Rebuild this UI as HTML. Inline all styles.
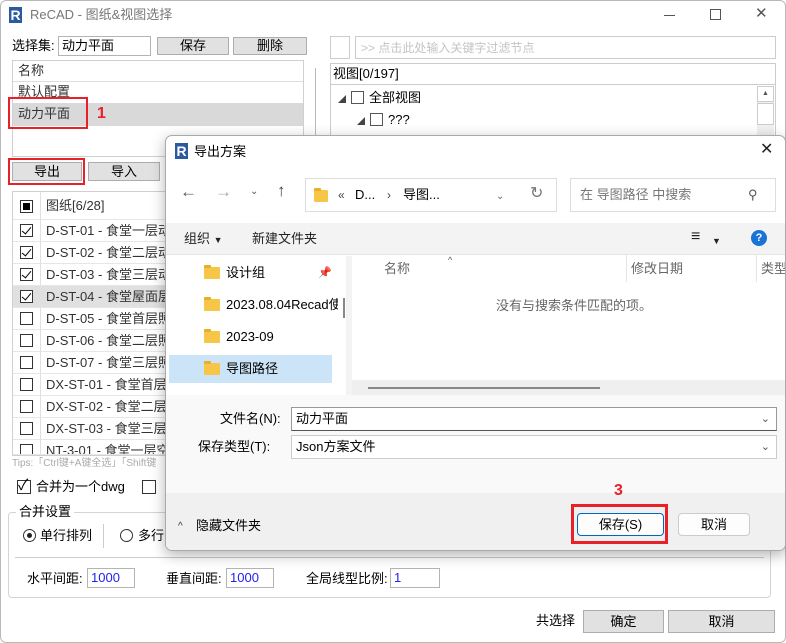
<!DOCTYPE html>
<html><head><meta charset="utf-8">
<style>
*{box-sizing:border-box;margin:0;padding:0}
body{width:786px;height:643px;overflow:hidden;background:#fff;font-family:"Liberation Sans","Noto Sans CJK SC",sans-serif;font-size:12px;line-height:16px;color:#000;position:relative}
.a{position:absolute;white-space:nowrap}
.btn{position:absolute;background:#e1e1e1;border:1px solid #adadad;text-align:center;font-size:12px}
.inp{position:absolute;background:#fff;border:1px solid #b4b4b4;line-height:16px}
.cb{position:absolute;width:13px;height:13px;border:1px solid #333;background:#fff}
.red{position:absolute;border:2px solid #e8202a}
.rn{position:absolute;color:#e8202a;font-weight:bold;font-size:16px;line-height:18px}
.row{position:absolute;left:13px;width:290px;height:22px;border-bottom:1px solid #e6e6e6}
.row span{position:absolute;left:33px;top:3px;color:#333;font-size:13px;white-space:nowrap}
.row .cb{left:7px;top:4px}
.row .ck::after{content:"";position:absolute;left:3px;top:0px;width:4px;height:8px;border:solid #000;border-width:0 1.5px 1.5px 0;transform:rotate(40deg)}
.fold{position:absolute;width:16px;height:12px;background:#f7c648;border-radius:1px}
.fold::before{content:"";position:absolute;left:0;top:-2px;width:7px;height:3px;background:#e9ae2a;border-radius:1px 1px 0 0}
</style></head><body>
<div class="a" style="left:0;top:0;width:786px;height:643px;border:1px solid #b9b9b9;border-radius:6px"></div>
<div class="a" style="left:9px;top:7px;width:13px;height:16px;background:#2c5aa0;color:#fff;font-weight:bold;font-size:14px;line-height:16px;text-align:center">R</div>
<div class="a" style="left:30px;top:7px;color:#777;font-size:13px">ReCAD - 图纸&amp;视图选择</div>
<div class="a" style="left:664px;top:15px;width:11px;height:1px;background:#555"></div>
<div class="a" style="left:710px;top:9px;width:11px;height:11px;border:1px solid #555"></div>
<div class="a" style="left:755px;top:6px;font-size:15px;color:#555">✕</div>

<div class="a" style="left:12px;top:38px;font-size:13px">选择集:</div>
<div class="inp" style="left:58px;top:36px;width:93px;height:20px;padding:1px 3px;font-size:13px">动力平面</div>
<div class="btn" style="left:157px;top:37px;width:72px;height:18px;line-height:16px;font-size:13px">保存</div>
<div class="btn" style="left:233px;top:37px;width:74px;height:18px;line-height:16px;font-size:13px">删除</div>

<div class="a" style="left:12px;top:60px;width:292px;height:97px;border:1px solid #d0d0d0;background:#fff"></div>
<div class="a" style="left:13px;top:61px;width:290px;height:21px;border-bottom:1px solid #ddd"><span class="a" style="left:5px;top:2px;color:#333;font-size:13px">名称</span></div>
<div class="a" style="left:18px;top:84px;color:#333;font-size:13px">默认配置</div>
<div class="a" style="left:13px;top:103px;width:290px;height:23px;background:#d9d9d9"></div>
<div class="a" style="left:18px;top:106px;color:#333;font-size:13px">动力平面</div>
<div class="red" style="left:8px;top:97px;width:80px;height:32px"></div>
<div class="rn" style="left:97px;top:105px">1</div>

<div class="btn" style="left:12px;top:162px;width:70px;height:19px;line-height:17px;font-size:13px">导出</div>
<div class="red" style="left:8px;top:158px;width:77px;height:27px"></div>
<div class="rn" style="left:91px;top:162px">2</div>
<div class="btn" style="left:88px;top:162px;width:72px;height:19px;line-height:17px;font-size:13px">导入</div>

<div class="a" style="left:12px;top:191px;width:300px;height:265px;border:1px solid #d0d0d0;background:#fff"></div>
<div class="a" style="left:40px;top:192px;width:1px;height:263px;background:#e0e0e0"></div>
<div class="row" style="top:192px;height:28px"><div class="cb" style="top:8px"><div style="position:absolute;left:2px;top:2px;width:7px;height:7px;background:#000"></div></div><span style="top:6px">图纸[6/28]</span></div>
<div class="row" style="top:220px"><div class="cb ck"></div><span>D-ST-01 - 食堂一层动</span></div>
<div class="row" style="top:242px"><div class="cb ck"></div><span>D-ST-02 - 食堂二层动</span></div>
<div class="row" style="top:264px"><div class="cb ck"></div><span>D-ST-03 - 食堂三层动</span></div>
<div class="row" style="top:286px;background:#e0e0e0"><div class="cb ck"></div><span>D-ST-04 - 食堂屋面层</span></div>
<div class="row" style="top:308px"><div class="cb"></div><span>D-ST-05 - 食堂首层照</span></div>
<div class="row" style="top:330px"><div class="cb"></div><span>D-ST-06 - 食堂二层照</span></div>
<div class="row" style="top:352px"><div class="cb"></div><span>D-ST-07 - 食堂三层照</span></div>
<div class="row" style="top:374px"><div class="cb"></div><span>DX-ST-01 - 食堂首层</span></div>
<div class="row" style="top:396px"><div class="cb"></div><span>DX-ST-02 - 食堂二层</span></div>
<div class="row" style="top:418px"><div class="cb"></div><span>DX-ST-03 - 食堂三层</span></div>
<div class="row" style="top:440px;height:15px;overflow:hidden"><div class="cb"></div><span>NT-3-01 - 食堂一层空</span></div>
<div class="a" style="left:12px;top:457px;color:#aaa;font-size:10px;line-height:13px">Tips:「Ctrl键+A键全选」「Shift键</div>

<div class="cb ck" style="left:17px;top:480px;width:14px;height:14px"></div>
<div class="a" style="left:18px;top:479px;font-size:15px;line-height:14px">✓</div>
<div class="a" style="left:36px;top:479px;font-size:13px">合并为一个dwg</div>
<div class="cb" style="left:142px;top:480px;width:14px;height:14px"></div>

<div class="a" style="left:8px;top:512px;width:763px;height:86px;border:1px solid #d4d4d4;border-radius:4px"></div>
<div class="a" style="left:16px;top:504px;background:#fff;padding:0 3px;font-size:13px">合并设置</div>
<div class="a" style="left:23px;top:529px;width:13px;height:13px;border:1px solid #333;border-radius:50%"><div style="position:absolute;left:3px;top:3px;width:5px;height:5px;border-radius:50%;background:#222"></div></div>
<div class="a" style="left:40px;top:528px;font-size:13px">单行排列</div>
<div class="a" style="left:103px;top:524px;width:1px;height:24px;background:#ccc"></div>
<div class="a" style="left:120px;top:529px;width:13px;height:13px;border:1px solid #333;border-radius:50%"></div>
<div class="a" style="left:138px;top:528px;font-size:13px">多行</div>
<div class="a" style="left:15px;top:557px;width:749px;height:1px;background:#ccc"></div>
<div class="a" style="left:27px;top:571px;font-size:13px">水平间距:</div>
<div class="inp" style="left:87px;top:568px;width:48px;height:20px;color:#2222ee;padding:1px 3px;font-size:13px">1000</div>
<div class="a" style="left:166px;top:571px;font-size:13px">垂直间距:</div>
<div class="inp" style="left:226px;top:568px;width:48px;height:20px;color:#2222ee;padding:1px 3px;font-size:13px">1000</div>
<div class="a" style="left:306px;top:571px;font-size:13px">全局线型比例:</div>
<div class="inp" style="left:390px;top:568px;width:50px;height:20px;color:#2222ee;padding:1px 3px;font-size:13px">1</div>

<div class="a" style="left:536px;top:613px;font-size:13px">共选择 <span style="color:#2222ee;margin:0 4px">6</span> 个</div>
<div class="btn" style="left:583px;top:610px;width:81px;height:23px;line-height:21px;font-size:13px">确定</div>
<div class="btn" style="left:668px;top:610px;width:107px;height:23px;line-height:21px;font-size:13px">取消</div>

<div class="a" style="left:330px;top:36px;width:20px;height:23px;border:1px solid #ccc"></div>
<div class="a" style="left:355px;top:36px;width:421px;height:23px;border:1px solid #ccc;color:#c4c4c4;padding:3px 5px;font-size:12px">&gt;&gt; 点击此处输入关键字过滤节点</div>
<div class="a" style="left:330px;top:63px;width:446px;height:80px;border:1px solid #ccc"></div>
<div class="a" style="left:331px;top:64px;width:444px;height:21px;border-bottom:1px solid #ccc;padding:2px 2px;font-size:13px">视图[0/197]</div>
<div class="a" style="left:338px;top:92px;font-size:8px;color:#444">◢</div>
<div class="a" style="left:351px;top:91px;width:13px;height:13px;border:1px solid #555"></div>
<div class="a" style="left:369px;top:90px;font-size:13px">全部视图</div>
<div class="a" style="left:357px;top:114px;font-size:8px;color:#444">◢</div>
<div class="a" style="left:370px;top:113px;width:13px;height:13px;border:1px solid #555"></div>
<div class="a" style="left:388px;top:112px;font-size:13px">???</div>
<div class="a" style="left:757px;top:86px;width:17px;height:56px;background:#f0f0f0"></div>
<div class="a" style="left:757px;top:86px;width:17px;height:16px;border:1px solid #ccc;background:#fff;font-size:7px;text-align:center;line-height:14px;color:#555">▲</div>
<div class="a" style="left:757px;top:103px;width:17px;height:22px;border:1px solid #ccc;background:#fff"></div>
<div class="a" style="left:315px;top:68px;width:1px;height:70px;background:#bbb"></div>

<div class="a" style="left:165px;top:135px;width:621px;height:416px;background:#fff;border:1px solid #aaa;border-radius:7px;box-shadow:0 4px 14px rgba(0,0,0,.3);overflow:hidden">
 <div class="a" style="left:9px;top:7px;width:13px;height:16px;background:#2c5aa0;color:#fff;font-weight:bold;font-size:14px;line-height:16px;text-align:center">R</div>
 <div class="a" style="left:28px;top:8px;font-size:13px">导出方案</div>
 <div class="a" style="left:594px;top:6px;font-size:16px;color:#222">✕</div>
 <div class="a" style="left:14px;top:48px;font-size:17px;color:#555">←</div>
 <div class="a" style="left:49px;top:48px;font-size:17px;color:#aaa">→</div>
 <div class="a" style="left:84px;top:48px;font-size:10px;color:#555">⌄</div>
 <div class="a" style="left:111px;top:47px;font-size:17px;color:#444">↑</div>
 <div class="a" style="left:139px;top:42px;width:252px;height:34px;border:1px solid #ddd"></div>
 <div class="fold" style="left:148px;top:54px;width:14px"></div>
 <div class="a" style="left:172px;top:51px;font-size:12px;color:#444">«</div>
 <div class="a" style="left:189px;top:51px;font-size:13px">D...</div>
 <div class="a" style="left:221px;top:51px;font-size:12px;color:#444">›</div>
 <div class="a" style="left:237px;top:51px;font-size:13px">导图...</div>
 <div class="a" style="left:330px;top:53px;font-size:10px;color:#666">⌄</div>
 <div class="a" style="left:364px;top:50px;font-size:16px;color:#777">↻</div>
 <div class="a" style="left:404px;top:42px;width:206px;height:34px;border:1px solid #ddd;color:#777;padding:8px 9px;font-size:13px">在 导图路径 中搜索</div>
 <div class="a" style="left:582px;top:51px;font-size:13px;color:#555">⚲</div>
 <div class="a" style="left:0;top:87px;width:621px;height:32px;background:#f3f3f3;border-bottom:1px solid #e5e5e5"></div>
 <div class="a" style="left:18px;top:95px;font-size:13px;color:#222">组织 <span style="font-size:9px">▼</span></div>
 <div class="a" style="left:86px;top:95px;font-size:13px;color:#222">新建文件夹</div>
 <div class="a" style="left:525px;top:93px;font-size:16px;color:#222">≡</div>
 <div class="a" style="left:546px;top:97px;font-size:9px;color:#222">▼</div>
 <div class="a" style="left:585px;top:94px;width:16px;height:16px;border-radius:50%;background:#1a73d6;color:#fff;font-weight:bold;font-size:11px;text-align:center;line-height:16px">?</div>
 <div class="fold" style="left:38px;top:131px"></div><div class="a" style="left:60px;top:129px;font-size:13px">设计组</div>
 <div class="a" style="left:152px;top:129px;font-size:11px;color:#999">📌</div>
 <div class="fold" style="left:38px;top:163px"></div><div class="a" style="left:60px;top:161px;font-size:13px;width:112px;overflow:hidden">2023.08.04Recad使</div>
 <div class="fold" style="left:38px;top:195px"></div><div class="a" style="left:60px;top:193px;font-size:13px">2023-09</div>
 <div class="a" style="left:3px;top:219px;width:163px;height:28px;background:#cce4f7"></div>
 <div class="fold" style="left:38px;top:227px"></div><div class="a" style="left:60px;top:225px;font-size:13px">导图路径</div>
 <div class="a" style="left:177px;top:162px;width:2px;height:20px;background:#888"></div>
 <div class="a" style="left:180px;top:120px;width:6px;height:140px;background:#f3f3f3"></div>
 <div class="a" style="left:282px;top:116px;font-size:9px;color:#555">^</div>
 <div class="a" style="left:218px;top:125px;font-size:13px;color:#666">名称</div>
 <div class="a" style="left:460px;top:119px;width:1px;height:27px;background:#e5e5e5"></div>
 <div class="a" style="left:465px;top:125px;font-size:13px;color:#666">修改日期</div>
 <div class="a" style="left:590px;top:119px;width:1px;height:27px;background:#e5e5e5"></div>
 <div class="a" style="left:595px;top:125px;font-size:13px;color:#666">类型</div>
 <div class="a" style="left:330px;top:162px;font-size:13px;color:#666">没有与搜索条件匹配的项。</div>
 <div class="a" style="left:186px;top:244px;width:435px;height:15px;background:#efefef"></div>
 <div class="a" style="left:202px;top:251px;width:232px;height:2px;background:#888"></div>
 <div class="a" style="left:0;top:259px;width:621px;height:98px;background:#f9f9f9"></div>
 <div class="a" style="left:54px;top:275px;font-size:13px">文件名(N):</div>
 <div class="a" style="left:125px;top:271px;width:486px;height:24px;border:1px solid #999;border-bottom-color:#555;background:#fff;padding:3px 4px;font-size:13px">动力平面<span style="position:absolute;right:6px;top:3px;font-size:11px;color:#555">⌄</span></div>
 <div class="a" style="left:32px;top:303px;font-size:13px">保存类型(T):</div>
 <div class="a" style="left:125px;top:299px;width:486px;height:24px;border:1px solid #ccc;background:#fff;padding:3px 4px;font-size:13px">Json方案文件<span style="position:absolute;right:6px;top:3px;font-size:11px;color:#555">⌄</span></div>
 <div class="a" style="left:0;top:357px;width:621px;height:59px;background:#f0f0f0"></div>
 <div class="a" style="left:12px;top:383px;font-size:10px;color:#333">^</div>
 <div class="a" style="left:30px;top:382px;font-size:13px">隐藏文件夹</div>
 <div class="a" style="left:411px;top:377px;width:87px;height:23px;border:1px solid #0067c0;border-radius:4px;background:#fdfdfd;text-align:center;line-height:21px;font-size:13px">保存(S)</div>
 <div class="a" style="left:512px;top:377px;width:72px;height:23px;border:1px solid #ccc;border-radius:4px;background:#fdfdfd;text-align:center;line-height:21px;font-size:13px">取消</div>
</div>
<div class="red" style="left:571px;top:504px;width:97px;height:40px;border-width:3px"></div>
<div class="rn" style="left:614px;top:482px">3</div>
</body></html>
